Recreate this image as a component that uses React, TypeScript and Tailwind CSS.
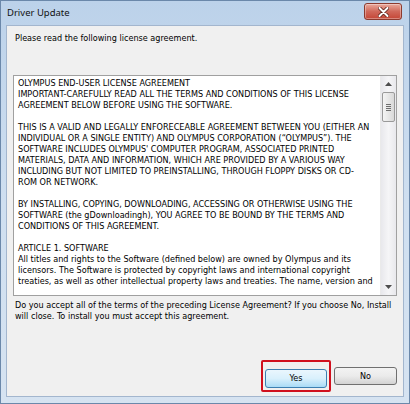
const licenseLines = [
  'OLYMPUS END-USER LICENSE AGREEMENT',
  'IMPORTANT-CAREFULLY READ ALL THE TERMS AND CONDITIONS OF THIS LICENSE',
  'AGREEMENT BELOW BEFORE USING THE SOFTWARE.',
  '',
  'THIS IS A VALID AND LEGALLY ENFORECEABLE AGREEMENT BETWEEN YOU (EITHER AN',
  'INDIVIDUAL OR A SINGLE ENTITY) AND OLYMPUS CORPORATION (“OLYMPUS”). THE',
  "SOFTWARE INCLUDES OLYMPUS' COMPUTER PROGRAM, ASSOCIATED PRINTED",
  'MATERIALS, DATA AND INFORMATION, WHICH ARE PROVIDED BY A VARIOUS WAY',
  'INCLUDING BUT NOT LIMITED TO PREINSTALLING, THROUGH FLOPPY DISKS OR CD-',
  'ROM OR NETWORK.',
  '',
  'BY INSTALLING, COPYING, DOWNLOADING, ACCESSING OR OTHERWISE USING THE',
  'SOFTWARE (the gDownloadingh), YOU AGREE TO BE BOUND BY THE TERMS AND',
  'CONDITIONS OF THIS AGREEMENT.',
  '',
  'ARTICLE 1. SOFTWARE',
  'All titles and rights to the Software (defined below) are owned by Olympus and its',
  'licensors. The Software is protected by copyright laws and international copyright',
  'treaties, as well as other intellectual property laws and treaties. The name, version and',
];

function Scrollbar() {
  return (
    <div className="w-[16px] h-full flex flex-col bg-gradient-to-r from-[#e8e8ec] via-[#f5f5f7] to-[#e8e8ec] border-l border-[#eaeaea]">
      {/* up arrow */}
      <div className="h-[16px] flex items-center justify-center">
        <svg width="7" height="4" viewBox="0 0 7 4">
          <path d="M0 4 L3.5 0 L7 4 Z" fill="#4d4d4d" />
        </svg>
      </div>
      {/* thumb */}
      <div className="mx-[1px] h-[30px] rounded-[2px] border border-[#9a9a9a] bg-gradient-to-r from-[#f4f4f4] to-[#d9d9d9] flex flex-col items-center justify-center gap-[1px]">
        <div className="w-[5px] h-px bg-[#6e6e6e]" />
        <div className="w-[5px] h-px bg-[#6e6e6e]" />
        <div className="w-[5px] h-px bg-[#6e6e6e]" />
        <div className="w-[5px] h-px bg-[#6e6e6e]" />
      </div>
      <div className="flex-1" />
      {/* down arrow */}
      <div className="h-[16px] flex items-center justify-center">
        <svg width="7" height="4" viewBox="0 0 7 4">
          <path d="M0 0 L7 0 L3.5 4 Z" fill="#4d4d4d" />
        </svg>
      </div>
    </div>
  );
}

export default function App() {
  return (
    <div className="w-[410px] h-[404px] flex flex-col bg-gradient-to-b from-[#bcd2ea] via-[#cfdff0] to-[#d6e3f1] border border-[#6b88aa] font-['DejaVu_Sans_Condensed','DejaVu_Sans',sans-serif] text-black">
      {/* title bar */}
      <div className="h-[24px] shrink-0 flex items-center justify-between pl-[6px] pr-[7px]">
        <span className="font-['Noto_Sans',sans-serif] text-[9.5px] leading-none text-[#111]">Driver Update</span>
        <div className="w-[38px] h-[17px] -mt-[3px] rounded-[3px] border border-[#8c3a2e] bg-gradient-to-b from-[#e9a99c] via-[#d0685a] to-[#c44535] flex items-center justify-center shadow-[inset_0_0_0_1px_rgba(255,255,255,0.35)]">
          <svg width="11" height="10" viewBox="0 0 11 10">
            <path d="M1.5 1 L9.5 9 M9.5 1 L1.5 9" stroke="#5a2019" strokeWidth="3.6" strokeLinecap="round" />
            <path d="M1.5 1 L9.5 9 M9.5 1 L1.5 9" stroke="#ffffff" strokeWidth="2" strokeLinecap="round" />
          </svg>
        </div>
      </div>

      {/* client area */}
      <div className="flex-1 mx-[5px] mb-[6px] bg-[#f0f0f0] border border-[#a3b6ce] flex flex-col px-[6px]">
        <div className="pt-[7px] pl-[2px] text-[9px] leading-[11px] whitespace-nowrap">
          Please read the following license agreement.
        </div>

        {/* license box */}
        <div className="mt-[31px] h-[221px] flex bg-white border border-[#a0a0a0]">
          <div className="flex-1 overflow-hidden pt-[2px] pl-[4px] text-[9px] leading-[11px]">
            {licenseLines.map((line, i) => (
              <div key={i} className="h-[11px] whitespace-nowrap">
                {line}
              </div>
            ))}
          </div>
          <Scrollbar />
        </div>

        <div className="mt-[4px] pl-[2px] text-[9px] leading-[11px]">
          <div className="whitespace-nowrap">
            Do you accept all of the terms of the preceding License Agreement? If you choose No, Install
          </div>
          <div className="whitespace-nowrap">will close. To install you must accept this agreement.</div>
        </div>

        <div className="flex-1" />

        {/* buttons */}
        <div className="flex justify-end items-center gap-[3px] mb-[4px]">
          <div className="p-[2px] rounded-[2px] border-2 border-[#d0101e]">
            <button className="w-[62px] h-[19px] rounded-[3px] border border-[#3c7fb1] bg-gradient-to-b from-[#eaf6fd] via-[#d9f0fc] to-[#a9dbf6] text-[9px] leading-none">
              Yes
            </button>
          </div>
          <button className="w-[63px] h-[18px] rounded-[3px] border border-[#707070] bg-gradient-to-b from-[#f3f3f3] via-[#ebebeb] to-[#d3d3d3] text-[9px] leading-none">
            No
          </button>
        </div>
      </div>
    </div>
  );
}
